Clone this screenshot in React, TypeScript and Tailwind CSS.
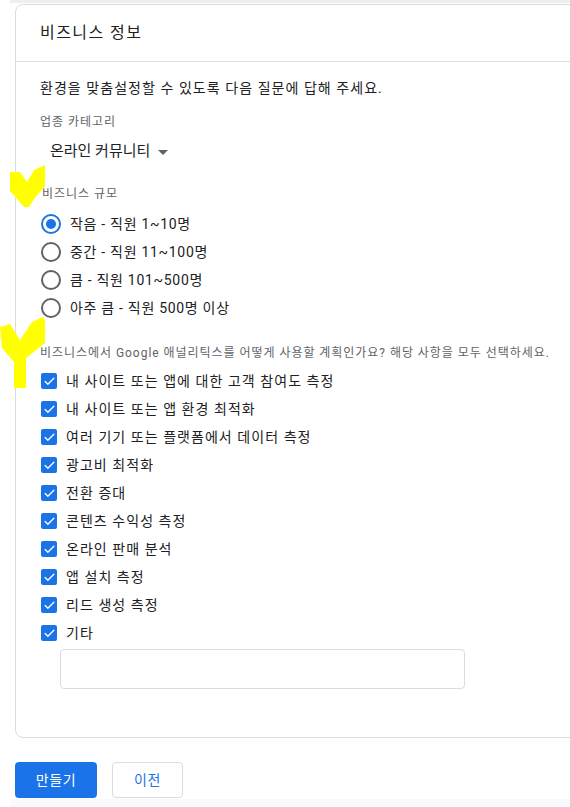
import { Check } from 'lucide-react';

const sizes = [
  '작음 - 직원 1~10명',
  '중간 - 직원 11~100명',
  '큼 - 직원 101~500명',
  '아주 큼 - 직원 500명 이상',
];

const uses = [
  '내 사이트 또는 앱에 대한 고객 참여도 측정',
  '내 사이트 또는 앱 환경 최적화',
  '여러 기기 또는 플랫폼에서 데이터 측정',
  '광고비 최적화',
  '전환 증대',
  '콘텐츠 수익성 측정',
  '온라인 판매 분석',
  '앱 설치 측정',
  '리드 생성 측정',
  '기타',
];

function Radio({ checked }: { checked: boolean }) {
  return (
    <span
      className={`flex items-center justify-center w-[20px] h-[20px] rounded-full border-2 ${
        checked ? 'border-[#1a73e8]' : 'border-[#5f6368]'
      }`}
    >
      {checked && <span className="w-[10px] h-[10px] rounded-full bg-[#1a73e8]" />}
    </span>
  );
}

function CheckBox() {
  return (
    <span className="flex items-center justify-center w-[16px] h-[16px] rounded-[2px] bg-[#1a73e8]">
      <Check size={13} strokeWidth={2.5} className="text-white" />
    </span>
  );
}

export default function App() {
  return (
    <div
      className="relative w-[570px] h-[807px] overflow-hidden bg-white text-[#202124]"
      style={{ fontFamily: 'Roboto, "Noto Sans CJK KR", sans-serif' }}
    >
      <div className="ml-[10px] h-[3px] bg-[#eceef0]" />

      {/* Card */}
      <div className="ml-[15px] mt-[1px] w-[600px] border border-[#dadce0] rounded-lg">
        <div className="h-[57px] px-[24px] flex items-center border-b border-[#dadce0] text-[16px] tracking-[0.09em]">
          비즈니스 정보
        </div>

        <div className="px-[24px] pt-[16px] pb-[48px]">
          <p className="text-[14px] leading-[20px] tracking-[0.075em]">
            환경을 맞춤설정할 수 있도록 다음 질문에 답해 주세요.
          </p>

          <p className="mt-[16px] text-[12px] leading-[16px] tracking-[0.08em] text-[#5f6368]">업종 카테고리</p>
          <div className="mt-[11px] pl-[10px] flex items-center h-[20px] text-[15px]">
            온라인 커뮤니티
            <span className="ml-[8px] mt-[2px] w-0 h-0 border-l-[5px] border-r-[5px] border-t-[5px] border-l-transparent border-r-transparent border-t-[#5f6368]" />
          </div>

          <p className="mt-[25px] ml-[2px] text-[12px] leading-[16px] tracking-[0.08em] text-[#5f6368]">비즈니스 규모</p>
          <div className="mt-[8px] flex flex-col">
            {sizes.map((s, i) => (
              <div key={s} className="h-[28px] flex items-center gap-[9px] pl-[1px] text-[14px] tracking-[0.05em]">
                <Radio checked={i === 0} />
                <span>{s}</span>
              </div>
            ))}
          </div>

          <p className="mt-[23px] text-[12px] leading-[16px] tracking-[0.08em] text-[#5f6368] whitespace-nowrap">
            비즈니스에서 Google 애널리틱스를 어떻게 사용할 계획인가요? 해당 사항을 모두 선택하세요.
          </p>
          <div className="mt-[6px] flex flex-col">
            {uses.map((u) => (
              <div key={u} className="h-[28px] flex items-center gap-[9px] pl-[1px] text-[14px] tracking-[0.075em]">
                <CheckBox />
                <span>{u}</span>
              </div>
            ))}
          </div>
          <div className="mt-[2px] ml-[20px] w-[405px] h-[40px] rounded border border-[#dadce0]" />
        </div>
      </div>

      {/* Buttons */}
      <div className="mt-[24px] ml-[15px] flex gap-[15px] text-[14px] tracking-[0.05em]">
        <button className="w-[82px] h-[36px] rounded bg-[#1a73e8] text-white">만들기</button>
        <button className="w-[71px] h-[36px] rounded border border-[#dadce0] text-[#1a73e8]">이전</button>
      </div>
      <div className="mt-[1px] ml-[10px] h-[10px] bg-[#f8f9fa]" />

      {/* yellow annotation marks */}
      <svg className="absolute left-0 top-0 pointer-events-none" width="60" height="400" viewBox="0 0 60 400">
        <polygon
          points="10,172 20,172 27,182 34,170 45,165 45,186 34,199 29,207 24,207 10,191"
          fill="#ffff00"
        />
        <polygon
          points="0,327 10,324 20,340 32,322 43,317 45,320 45,343 26,358 26,388 14,388 14,362 2,348"
          fill="#ffff00"
        />
      </svg>
    </div>
  );
}
